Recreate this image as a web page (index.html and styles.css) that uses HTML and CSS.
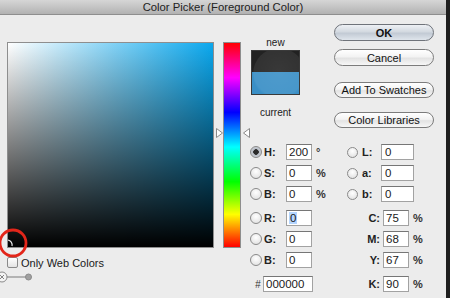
FILE: index.html
```html
<!DOCTYPE html>
<html lang="en">
<head>
  <meta charset="UTF-8" />
  <title>Color Picker (Foreground Color)</title>
  <link rel="stylesheet" href="styles.css">
</head>
<body>
  <div class="window">
    <div class="main">
      <div class="titlebar">Color Picker (Foreground Color)</div>
      <div class="dialog">
        <div class="picker">
          <div class="picker-top">
            <div class="field"></div>
            <div class="hue-wrap">
              <svg class="arrow arrow-left" width="7" height="10" viewBox="0 0 7 10"><polygon points="0.5,0.5 6.5,5 0.5,9.5" fill="#fff" stroke="#8a8a8a"/></svg>
              <div class="hue"></div>
              <svg class="arrow arrow-right" width="7" height="10" viewBox="0 0 7 10"><polygon points="6.5,0.5 0.5,5 6.5,9.5" fill="#fff" stroke="#8a8a8a"/></svg>
            </div>
          </div>
          <svg class="marker" width="32" height="32" viewBox="0 0 32 32">
            <circle cx="16" cy="16" r="13" fill="none" stroke="#e3261a" stroke-width="2.8"/>
            <path d="M11 13 A5 5 0 0 1 15 19" fill="none" stroke="#e8e8e8" stroke-width="1.2"/>
          </svg>
          <label class="web-only"><span class="checkbox"></span>Only Web Colors</label>
          <div class="zoom-slider">
            <svg width="36" height="12" viewBox="0 0 36 12">
              <circle cx="2" cy="6" r="5" fill="#f4f4f4" stroke="#8a8a8a"/>
              <path d="M0 4 L4 8 M4 4 L0 8" stroke="#777" stroke-width="0.9"/>
              <line x1="7" y1="6" x2="26" y2="6" stroke="#7a7a7a" stroke-width="1"/>
              <circle cx="28.5" cy="6" r="3" fill="#a0a0a0" stroke="#8a8a8a"/>
            </svg>
          </div>
        </div>

        <div class="side">
          <div class="side-top">
            <div class="swatch">
              <div class="swatch-label">new</div>
              <div class="swatch-box">
                <div class="swatch-new"></div>
                <div class="swatch-current"></div>
              </div>
              <div class="swatch-label current-label">current</div>
            </div>
            <div class="buttons">
              <button class="btn btn-default">OK</button>
              <button class="btn btn-cancel">Cancel</button>
              <button class="btn btn-small btn-swatches">Add To Swatches</button>
              <button class="btn btn-small btn-libraries">Color Libraries</button>
            </div>
          </div>

          <div class="fields">
            <div class="col col-hsb">
              <div class="row"><span class="radio checked"></span><span class="label">H:</span><span class="box">200</span><span class="unit">°</span></div>
              <div class="row"><span class="radio"></span><span class="label">S:</span><span class="box">0</span><span class="unit">%</span></div>
              <div class="row"><span class="radio"></span><span class="label">B:</span><span class="box">0</span><span class="unit">%</span></div>
              <div class="row group"><span class="radio"></span><span class="label">R:</span><span class="box"><span class="selected-text">0</span></span></div>
              <div class="row"><span class="radio"></span><span class="label">G:</span><span class="box">0</span></div>
              <div class="row"><span class="radio"></span><span class="label">B:</span><span class="box">0</span></div>
              <div class="row group hex-row"><span class="hash">#</span><span class="box box-hex">000000</span></div>
            </div>
            <div class="col col-lab">
              <div class="row"><span class="radio"></span><span class="label">L:</span><span class="box box-lab">0</span></div>
              <div class="row"><span class="radio"></span><span class="label">a:</span><span class="box box-lab">0</span></div>
              <div class="row"><span class="radio"></span><span class="label">b:</span><span class="box box-lab">0</span></div>
              <div class="row group"><span class="label cmyk">C:</span><span class="box">75</span><span class="unit">%</span></div>
              <div class="row"><span class="label cmyk">M:</span><span class="box">68</span><span class="unit">%</span></div>
              <div class="row"><span class="label cmyk">Y:</span><span class="box">67</span><span class="unit">%</span></div>
              <div class="row group"><span class="label cmyk">K:</span><span class="box">90</span><span class="unit">%</span></div>
            </div>
          </div>
        </div>
      </div>
    </div>
    <div class="edge"></div>
  </div>
</body>
</html>
```

FILE: styles.css
```css
body {
  margin: 0;
  background-color: #ececec;
  font-family: "Liberation Sans", Arial, sans-serif;
  font-size: 11px;
  color: #1a1a1a;
}

.window {
  display: flex;
  width: 450px;
  height: 298px;
  overflow: hidden;
}

.main {
  width: 446px;
  display: flex;
  flex-direction: column;
}

.edge {
  width: 4px;
  background-color: #1e1e1e;
}

.titlebar {
  box-sizing: border-box;
  height: 15px;
  line-height: 14px;
  text-align: center;
  color: #222;
  background: linear-gradient(#d6d6d6, #b2b2b2);
  border-bottom: 1px solid #8e8e8e;
  font-size: 11.3px;
}

.dialog {
  display: flex;
  padding-left: 7px;
}

/* colour field + hue strip */
.picker {
  position: relative;
  margin-top: 27px;
}

.picker-top {
  display: flex;
}

.field {
  box-sizing: border-box;
  width: 207px;
  height: 206px;
  border: 1px solid #8e8e8e;
  background:
    linear-gradient(to top, #000, rgba(0, 0, 0, 0)),
    linear-gradient(to right, #fff, #0ba8ee);
}

.hue-wrap {
  position: relative;
  margin-left: 9px;
}

.hue {
  box-sizing: border-box;
  width: 18px;
  height: 206px;
  border: 1px solid #8e8e8e;
  background: linear-gradient(#f00, #f0f 17%, #00f 34%, #0ff 51%, #0f0 68%, #ff0 84%, #f00);
}

.arrow {
  position: absolute;
  top: 86px;
}

.arrow-left {
  left: -7px;
}

.arrow-right {
  left: 20px;
}

.marker {
  position: absolute;
  left: -10px;
  top: 185px;
}

.web-only {
  display: flex;
  align-items: center;
  margin-top: 9px;
  height: 11px;
  font-size: 11px;
}

.checkbox {
  box-sizing: border-box;
  width: 11px;
  height: 11px;
  margin-right: 3px;
  border: 1px solid #8a8a8a;
  border-radius: 2px;
  background: linear-gradient(#fff, #e4e4e4);
}

.zoom-slider {
  margin: 3px 0 0 -7px;
  height: 12px;
}

.zoom-slider svg {
  display: block;
}

/* right side */
.side {
  padding: 9px 0 0 9px;
}

.side-top {
  display: flex;
}

.swatch {
  display: flex;
  flex-direction: column;
  align-items: center;
  width: 49px;
  margin: 12px 0 0 1px;
}

.swatch-label {
  line-height: 13px;
  font-size: 10px;
  color: #222;
}

.current-label {
  margin-top: 11px;
}

.swatch-box {
  position: relative;
  box-sizing: border-box;
  width: 49px;
  height: 45px;
  margin-top: 1px;
  border: 1px solid #3a3a3a;
  overflow: hidden;
}

.swatch-new {
  height: 21px;
  background-color: #222;
}

.swatch-current {
  height: 22px;
  background-color: #3a8fc6;
}

.swatch-box::after {
  content: "";
  position: absolute;
  left: 1px;
  top: -3px;
  width: 52px;
  height: 52px;
  border-radius: 50%;
  background: radial-gradient(circle at 50% 45%, rgba(255, 255, 255, 0.1), rgba(255, 255, 255, 0.07) 65%, rgba(255, 255, 255, 0) 72%);
}

.buttons {
  display: flex;
  flex-direction: column;
  margin-left: 34px;
}

.btn {
  box-sizing: border-box;
  width: 100px;
  height: 17px;
  padding: 0;
  border: 1px solid #7c7c7c;
  border-radius: 9px;
  background: linear-gradient(#ffffff, #f3f3f3 45%, #e3e3e3 55%, #f7f7f7);
  font-family: "Liberation Sans", Arial, sans-serif;
  font-size: 11px;
  color: #111;
}

.btn-default {
  font-weight: bold;
  background: linear-gradient(#eef1f5, #d3d9e0 45%, #c2cad4 55%, #dfe5ec);
  border-color: #6f737a;
}

.btn-cancel {
  margin-top: 8px;
}

.btn-small {
  height: 16px;
}

.btn-swatches {
  margin-top: 16px;
}

.btn-libraries {
  margin-top: 14px;
}

/* numeric fields */
.fields {
  display: flex;
  margin-top: 16px;
}

.col {
  display: flex;
  flex-direction: column;
  gap: 5px;
}

.col-hsb {
  width: 97px;
}

.row {
  display: flex;
  align-items: center;
  height: 16px;
}

.row.group {
  margin-top: 3px;
}

.radio {
  box-sizing: border-box;
  width: 12px;
  height: 12px;
  border: 1px solid #8a8a8a;
  border-radius: 50%;
  background: radial-gradient(circle at 50% 35%, #ffffff, #dcdcdc);
}

.radio.checked {
  background: radial-gradient(circle, #2b2b2b 0 2.5px, #b9bec6 3px, #d6dae0);
}

.label {
  width: 22px;
  margin-left: 2px;
  font-weight: bold;
  font-size: 11px;
  color: #222;
}

.col-lab .radio {
  width: 11px;
  height: 11px;
}

.col-lab .label {
  width: 19px;
  margin-left: 4px;
}

.col-lab .label.cmyk {
  width: 33px;
  margin-left: 0;
  padding-right: 3px;
  text-align: right;
}

.box {
  box-sizing: border-box;
  width: 26px;
  height: 16px;
  padding-left: 2px;
  line-height: 14px;
  font-size: 11.5px;
  background-color: #fff;
  border: 1px solid #a2a2a2;
  border-top-color: #767676;
}

.box-lab {
  width: 33px;
  padding-left: 3px;
}

.box-hex {
  width: 50px;
}

.selected-text {
  background-color: #b4d5fe;
  padding: 0 1px;
}

.unit {
  margin-left: 4px;
  font-weight: bold;
  color: #333;
}

.hex-row {
  padding-left: 5px;
}

.hash {
  width: 8px;
  font-style: italic;
  font-size: 10px;
  color: #333;
}
```
